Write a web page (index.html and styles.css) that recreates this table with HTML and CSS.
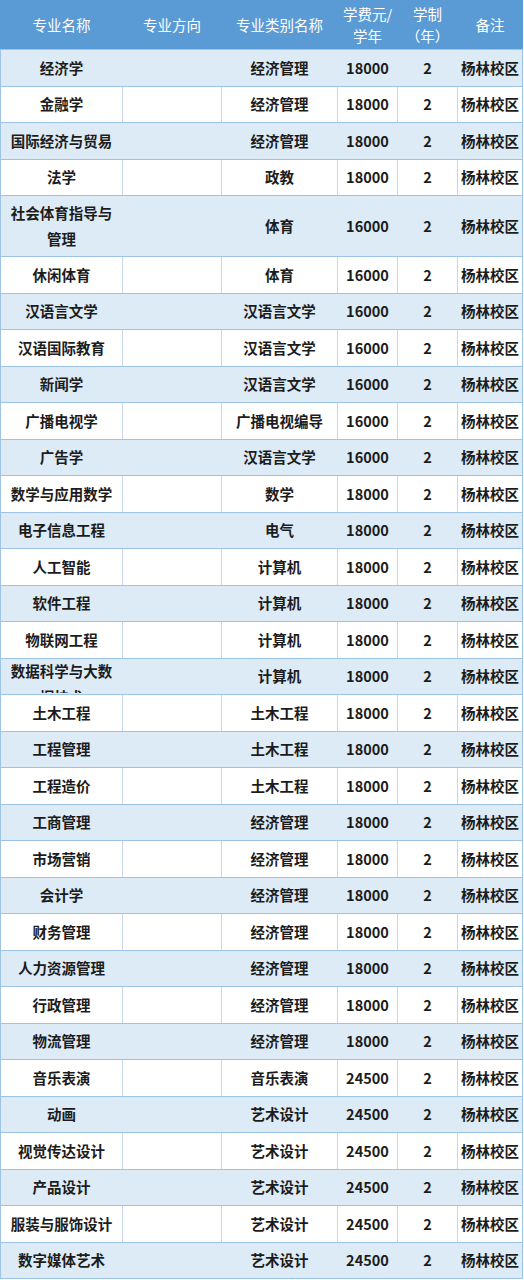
FILE: index.html
```html
<!DOCTYPE html>
<html lang="zh-CN">
<head>
<meta charset="utf-8">
<title>专业学费</title>
<link rel="stylesheet" href="styles.css">
</head>
<body>
<table class="fees">
  <colgroup>
    <col class="c-name"><col class="c-dir"><col class="c-cat"><col class="c-fee"><col class="c-yrs"><col class="c-note">
  </colgroup>
  <thead>
    <tr>
      <th>专业名称</th><th>专业方向</th><th>专业类别名称</th><th>学费元/学年</th><th>学制（年）</th><th>备注</th>
    </tr>
  </thead>
  <tbody>
    <tr><td>经济学</td><td></td><td>经济管理</td><td>18000</td><td>2</td><td>杨林校区</td></tr>
    <tr><td>金融学</td><td></td><td>经济管理</td><td>18000</td><td>2</td><td>杨林校区</td></tr>
    <tr><td>国际经济与贸易</td><td></td><td>经济管理</td><td>18000</td><td>2</td><td>杨林校区</td></tr>
    <tr><td>法学</td><td></td><td>政教</td><td>18000</td><td>2</td><td>杨林校区</td></tr>
    <tr class="tall"><td>社会体育指导与管理</td><td></td><td>体育</td><td>16000</td><td>2</td><td>杨林校区</td></tr>
    <tr><td>休闲体育</td><td></td><td>体育</td><td>16000</td><td>2</td><td>杨林校区</td></tr>
    <tr><td>汉语言文学</td><td></td><td>汉语言文学</td><td>16000</td><td>2</td><td>杨林校区</td></tr>
    <tr><td>汉语国际教育</td><td></td><td>汉语言文学</td><td>16000</td><td>2</td><td>杨林校区</td></tr>
    <tr><td>新闻学</td><td></td><td>汉语言文学</td><td>16000</td><td>2</td><td>杨林校区</td></tr>
    <tr><td>广播电视学</td><td></td><td>广播电视编导</td><td>16000</td><td>2</td><td>杨林校区</td></tr>
    <tr><td>广告学</td><td></td><td>汉语言文学</td><td>16000</td><td>2</td><td>杨林校区</td></tr>
    <tr><td>数学与应用数学</td><td></td><td>数学</td><td>18000</td><td>2</td><td>杨林校区</td></tr>
    <tr><td>电子信息工程</td><td></td><td>电气</td><td>18000</td><td>2</td><td>杨林校区</td></tr>
    <tr><td>人工智能</td><td></td><td>计算机</td><td>18000</td><td>2</td><td>杨林校区</td></tr>
    <tr><td>软件工程</td><td></td><td>计算机</td><td>18000</td><td>2</td><td>杨林校区</td></tr>
    <tr><td>物联网工程</td><td></td><td>计算机</td><td>18000</td><td>2</td><td>杨林校区</td></tr>
    <tr><td><div class="clip">数据科学与大数据技术</div></td><td></td><td>计算机</td><td>18000</td><td>2</td><td>杨林校区</td></tr>
    <tr><td>土木工程</td><td></td><td>土木工程</td><td>18000</td><td>2</td><td>杨林校区</td></tr>
    <tr><td>工程管理</td><td></td><td>土木工程</td><td>18000</td><td>2</td><td>杨林校区</td></tr>
    <tr><td>工程造价</td><td></td><td>土木工程</td><td>18000</td><td>2</td><td>杨林校区</td></tr>
    <tr><td>工商管理</td><td></td><td>经济管理</td><td>18000</td><td>2</td><td>杨林校区</td></tr>
    <tr><td>市场营销</td><td></td><td>经济管理</td><td>18000</td><td>2</td><td>杨林校区</td></tr>
    <tr><td>会计学</td><td></td><td>经济管理</td><td>18000</td><td>2</td><td>杨林校区</td></tr>
    <tr><td>财务管理</td><td></td><td>经济管理</td><td>18000</td><td>2</td><td>杨林校区</td></tr>
    <tr><td>人力资源管理</td><td></td><td>经济管理</td><td>18000</td><td>2</td><td>杨林校区</td></tr>
    <tr><td>行政管理</td><td></td><td>经济管理</td><td>18000</td><td>2</td><td>杨林校区</td></tr>
    <tr><td>物流管理</td><td></td><td>经济管理</td><td>18000</td><td>2</td><td>杨林校区</td></tr>
    <tr><td>音乐表演</td><td></td><td>音乐表演</td><td>24500</td><td>2</td><td>杨林校区</td></tr>
    <tr><td>动画</td><td></td><td>艺术设计</td><td>24500</td><td>2</td><td>杨林校区</td></tr>
    <tr><td>视觉传达设计</td><td></td><td>艺术设计</td><td>24500</td><td>2</td><td>杨林校区</td></tr>
    <tr><td>产品设计</td><td></td><td>艺术设计</td><td>24500</td><td>2</td><td>杨林校区</td></tr>
    <tr><td>服装与服饰设计</td><td></td><td>艺术设计</td><td>24500</td><td>2</td><td>杨林校区</td></tr>
    <tr><td>数字媒体艺术</td><td></td><td>艺术设计</td><td>24500</td><td>2</td><td>杨林校区</td></tr>
  </tbody>
</table>
</body>
</html>
```

FILE: styles.css
```css
html, body {
  margin: 0;
  padding: 0;
  background: #ffffff;
}

body {
  font-family: "Noto Sans CJK SC", "Noto Sans", "DejaVu Sans", sans-serif;
}

.fees {
  width: 522px;
  table-layout: fixed;
  border-collapse: collapse;
  border: 1px solid #9dc3e6;
  font-size: 14.5px;
}

.c-name { width: 122px; }
.c-dir  { width: 99px; }
.c-cat  { width: 116px; }
.c-fee  { width: 60px; }
.c-yrs  { width: 60px; }
.c-note { width: 65px; }

.fees th {
  height: 48px;
  padding: 0 2px;
  background: #5b9bd5;
  color: #ffffff;
  font-weight: 400;
  line-height: 22px;
  text-align: center;
  vertical-align: middle;
  border: 1px solid #5b9bd5;
  border-bottom: 1px solid #9dc3e6;
}

.fees td {
  height: 35.5px;
  padding: 0 1px;
  color: #1c1c1c;
  font-weight: 700;
  line-height: 26px;
  text-align: center;
  vertical-align: middle;
  border-top: 1px solid #9dc3e6;
  border-bottom: 1px solid #9dc3e6;
  border-left: 1px solid #c6d6ec;
  border-right: 1px solid #c6d6ec;
  background: #ffffff;
  white-space: normal;
  overflow: hidden;
}

.fees td:first-child {
  padding: 0 6px;
}

.fees tbody tr:nth-child(odd) td {
  background: #ddebf7;
  border-left-color: #ddebf7;
  border-right-color: #ddebf7;
}

.fees tbody tr td:first-child { border-left-color: #9dc3e6; }
.fees tbody tr td:last-child { border-right-color: #9dc3e6; }

.fees tbody tr.tall td {
  height: 60px;
}

.clip {
  height: 35px;
  overflow: hidden;
  margin-top: -2px;
}
```
